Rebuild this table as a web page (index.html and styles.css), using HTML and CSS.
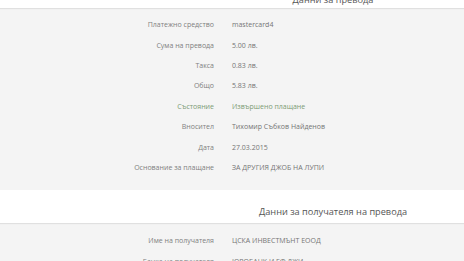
FILE: index.html
```html
<!DOCTYPE html>
<html lang="bg">
<head>
<meta charset="utf-8">
<link rel="stylesheet" href="styles.css">
</head>
<body>
<div class="band band-top">
  <div class="title">Данни за превода</div>
</div>
<div class="section section-first">
  <div class="row"><span class="label">Платежно средство</span><span class="value">mastercard4</span></div>
  <div class="row"><span class="label">Сума на превода</span><span class="value">5.00 лв.</span></div>
  <div class="row"><span class="label">Такса</span><span class="value">0.83 лв.</span></div>
  <div class="row"><span class="label">Общо</span><span class="value">5.83 лв.</span></div>
  <div class="row ok"><span class="label">Състояние</span><span class="value">Извършено плащане</span></div>
  <div class="row"><span class="label">Вносител</span><span class="value">Тихомир Събков Найденов</span></div>
  <div class="row"><span class="label">Дата</span><span class="value">27.03.2015</span></div>
  <div class="row"><span class="label">Основание за плащане</span><span class="value">ЗА ДРУГИЯ ДЖОБ НА ЛУПИ</span></div>
</div>
<div class="band band-mid">
  <div class="title">Данни за получателя на превода</div>
</div>
<div class="section section-second">
  <div class="row"><span class="label">Име на получателя</span><span class="value">ЦСКА ИНВЕСТМЪНТ ЕООД</span></div>
  <div class="row"><span class="label">Банка на получателя</span><span class="value">ЮРОБАНК И ЕФ ДЖИ</span></div>
</div>
</body>
</html>
```
FILE: styles.css
```css
html, body {
  margin: 0;
  padding: 0;
  background: #f4f4f4;
  overflow: hidden;
}
body {
  font-family: "Open Sans", "DejaVu Sans", sans-serif;
  color: #6f6f6f;
  width: 464px;
  height: 261px;
}
.band {
  background: #ffffff;
  display: grid;
  grid-template-columns: 202px 1fr;
  box-shadow: 0 1px 1px rgba(0,0,0,0.08);
  position: relative;
  z-index: 1;
}
.band .title {
  grid-column: 2;
  text-align: center;
  font-size: 9.2px;
  color: #555;
}
.band-top {
  height: 8px;
  grid-template-rows: 8px;
  overflow: hidden;
  align-items: end;
}
.band-top .title {
  line-height: 14px;
  margin-bottom: 1px;
}
.band-mid {
  height: 33px;
  align-items: center;
}
.band-mid .title {
  line-height: 14px;
  padding-top: 11px;
}
.section {
  background: #f4f4f4;
}
.section-first {
  padding: 7px 0 12px;
}
.section-second {
  padding: 8px 0 0;
}
.row {
  display: grid;
  grid-template-columns: 214px 1fr;
  column-gap: 18px;
  height: 20.4px;
  align-items: center;
  font-size: 7px;
  line-height: 10px;
}
.label {
  text-align: right;
  color: #808080;
}
.value {
  color: #747474;
}
.row.ok .label,
.row.ok .value {
  color: #7c9b74;
}
```
